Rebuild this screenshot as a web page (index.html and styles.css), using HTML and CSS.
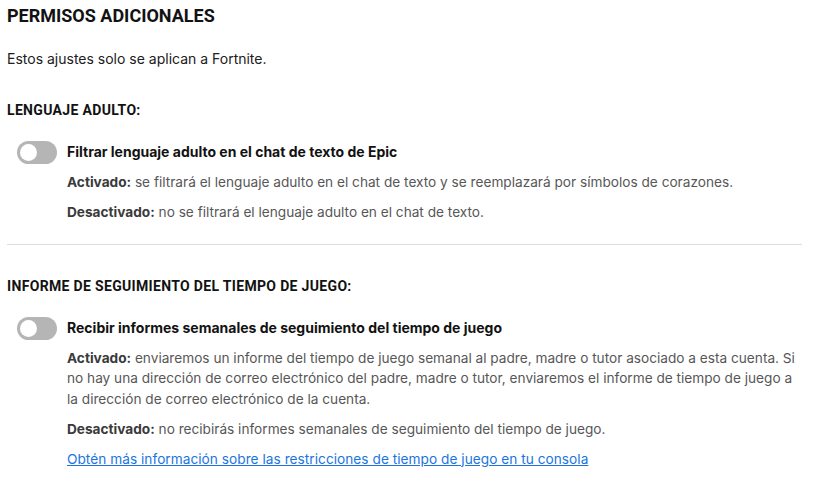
FILE: index.html
```html
<!DOCTYPE html>
<html lang="es">
<head>
<meta charset="utf-8">
<title>Permisos adicionales</title>
<link rel="stylesheet" href="styles.css">
</head>
<body>
<main class="page">
  <h1 class="title">PERMISOS ADICIONALES</h1>
  <p class="intro">Estos ajustes solo se aplican a Fortnite.</p>

  <section class="section section-first">
    <h2 class="section-title">LENGUAJE ADULTO:</h2>
    <div class="setting">
      <span class="toggle"><span class="knob"></span></span>
      <div class="setting-body">
        <div class="label">Filtrar lenguaje adulto en el chat de texto de Epic</div>
        <p class="desc"><b>Activado:</b> se filtrará el lenguaje adulto en el chat de texto y se reemplazará por símbolos de corazones.</p>
        <p class="desc"><b>Desactivado:</b> no se filtrará el lenguaje adulto en el chat de texto.</p>
      </div>
    </div>
  </section>

  <hr class="divider">

  <section class="section section-second">
    <h2 class="section-title">INFORME DE SEGUIMIENTO DEL TIEMPO DE JUEGO:</h2>
    <div class="setting">
      <span class="toggle"><span class="knob"></span></span>
      <div class="setting-body">
        <div class="label">Recibir informes semanales de seguimiento del tiempo de juego</div>
        <p class="desc"><b>Activado:</b> enviaremos un informe del tiempo de juego semanal al padre, madre o tutor asociado a esta cuenta. Si no hay una dirección de correo electrónico del padre, madre o tutor, enviaremos el informe de tiempo de juego a la dirección de correo electrónico de la cuenta.</p>
        <p class="desc"><b>Desactivado:</b> no recibirás informes semanales de seguimiento del tiempo de juego.</p>
        <p class="desc"><a class="link" href="#">Obtén más información sobre las restricciones de tiempo de juego en tu consola</a></p>
      </div>
    </div>
  </section>
</main>
</body>
</html>
```

FILE: styles.css
```css
html, body {
  margin: 0;
  padding: 0;
  background: #ffffff;
}
body {
  font-family: Inter, "Noto Sans", sans-serif;
  color: #202020;
}
.page {
  padding: 0 12px 0 7px;
}
.title {
  margin: 0;
  padding-top: 6px;
  font-family: Roboto, Inter, sans-serif;
  font-weight: 700;
  font-size: 18px;
  line-height: 20px;
  color: #121212;
}
.intro {
  margin: 23px 0 0;
  font-size: 14px;
  line-height: 20px;
  color: #202020;
}
.section-title {
  margin: 0;
  font-family: Roboto, Inter, sans-serif;
  font-weight: 700;
  font-size: 14px;
  line-height: 20px;
  letter-spacing: 0.33px;
  color: #121212;
}
.section-first .section-title {
  margin-top: 31px;
}
.section-second .section-title {
  margin-top: 31px;
}
.setting {
  display: flex;
  gap: 10px;
  margin-top: 22px;
  padding-left: 10px;
}
.toggle {
  flex: none;
  width: 40px;
  height: 23px;
  border-radius: 12px;
  background: #b5b5b5;
  display: flex;
  align-items: center;
  padding-left: 3px;
  box-sizing: border-box;
  margin-top: -1px;
}
.knob {
  width: 17px;
  height: 17px;
  border-radius: 50%;
  background: #ffffff;
}
.setting-body {
  flex: 1;
}
.label {
  font-weight: 700;
  font-size: 14px;
  line-height: 20px;
  color: #121212;
  margin-bottom: 1px;
}
.desc {
  margin: 9.5px 0 0;
  font-size: 13.65px;
  line-height: 20.5px;
  color: #575757;
}
.desc b {
  font-weight: 700;
  color: #3a3a3a;
}
.link {
  color: #1a75e0;
  text-decoration: underline;
  letter-spacing: 0.04px;
}
.divider {
  border: 0;
  border-top: 1px solid #dddddd;
  margin: 22px 0 0;
}
```
